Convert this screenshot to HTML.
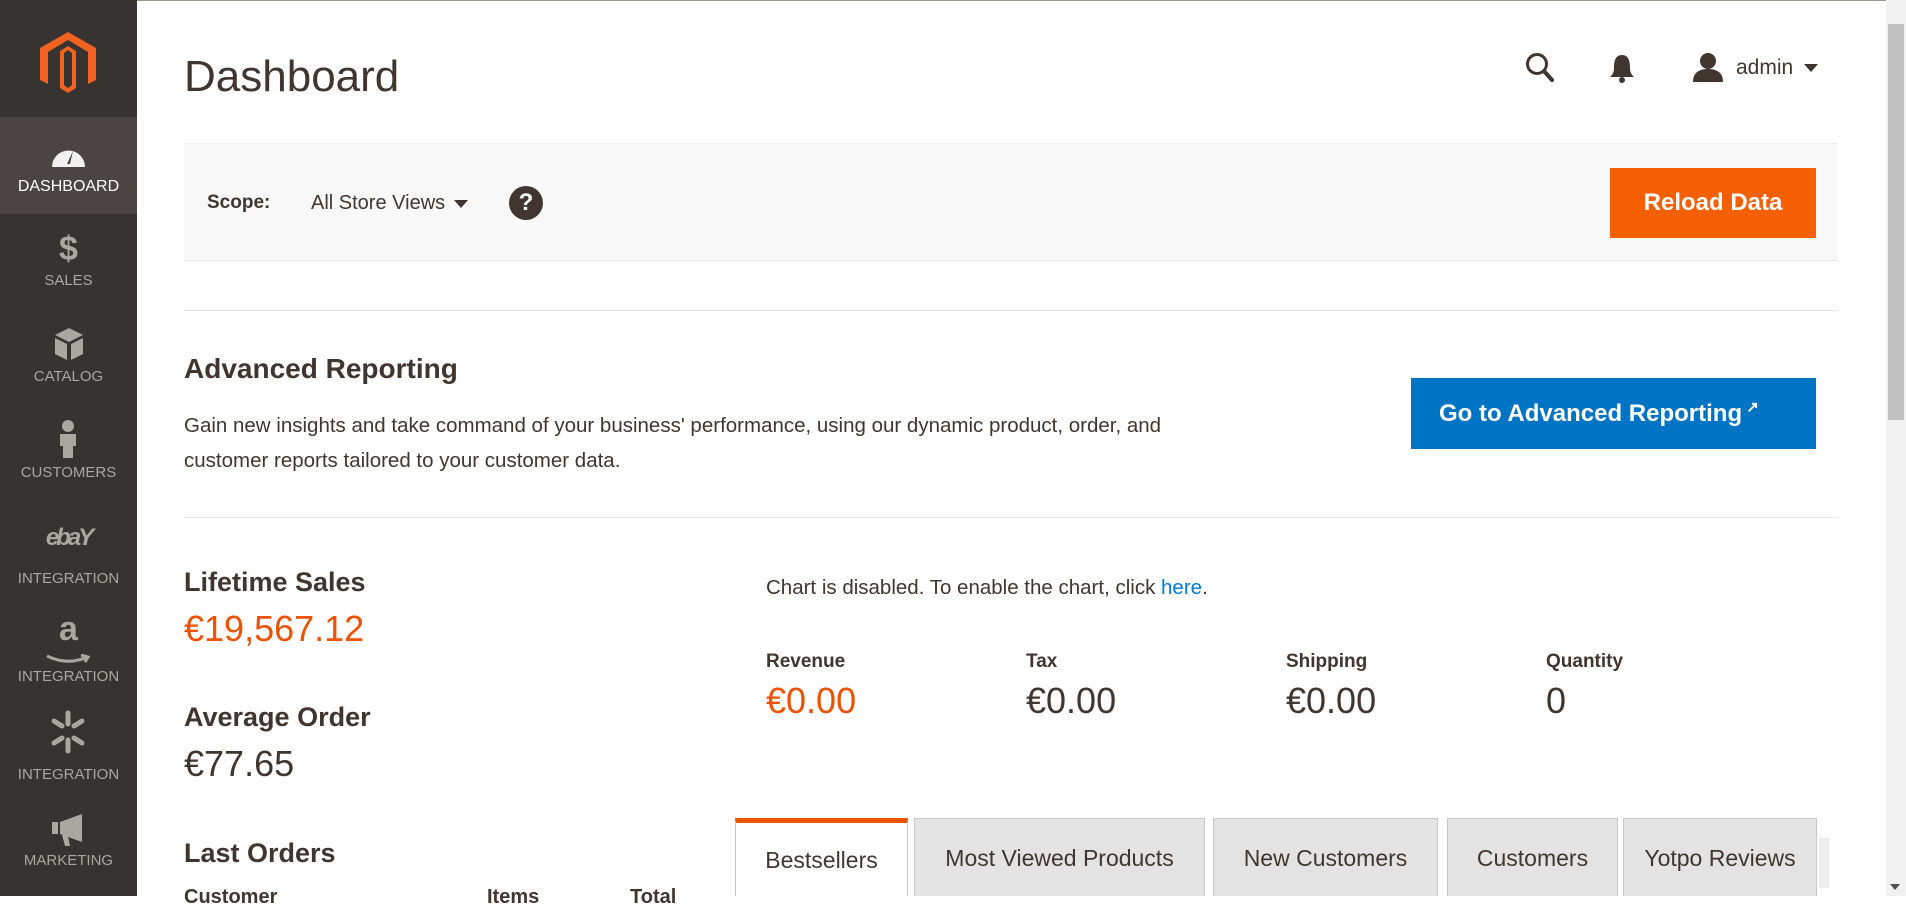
<!DOCTYPE html>
<html><head><meta charset="utf-8"><style>
*{margin:0;padding:0;box-sizing:border-box}
body{width:1906px;height:896px;overflow:hidden;background:#fefefe;font-family:"Liberation Sans",sans-serif;color:#41362f;position:relative}
.abs{position:absolute}
#side{left:0;top:0;width:137px;height:896px;background:#373330}
.item{position:absolute;left:0;width:137px;text-align:center;color:#aaa6a0;font-size:15px}
.item .lb{position:absolute;left:0;right:0}
.b{font-weight:bold}
.tab{position:absolute;top:818px;height:78px;background:#e3e3e3;border:1px solid #c8c8c8;border-bottom:none;font-size:23px;color:#41362f;text-align:center;line-height:78px;white-space:nowrap}
</style></head><body>
<div class="abs" style="left:0;top:0;width:1906px;height:1px;background:#9a9a8a"></div>
<div id="side" class="abs">
  <svg class="abs" style="left:40px;top:32px" width="56" height="62" viewBox="0 0 56 62">
    <path d="M28 0 L56 16 V48 L48 52 V20 L28 8 L8 20 V52 L0 48 V16 Z" fill="#f26322"/>
    <path d="M28 14 L36 19 V56 L28 61 L20 56 V19 Z M24 21 V53 L28 56 L32 53 V21 L28 18 Z" fill="#f26322"/>
  </svg>
  <div class="abs" style="left:0;top:117px;width:137px;height:97px;background:#4a4542"></div>
  <div class="item" style="top:117px;height:97px;color:#fff">
    <svg class="abs" style="left:50px;top:26px" width="37" height="24" viewBox="0 0 37 24"><path d="M2 24 A16.5 16.5 0 0 1 35 24 Z" fill="#f1f1f1"/><path d="M17 21 L23 8 L20 21 Z" fill="#4a4542"/></svg>
    <div class="lb" style="top:61px;font-size:16px">DASHBOARD</div></div>
  <div class="item" style="top:214px;height:96px"><div class="lb b" style="top:16px;font-size:34px;color:#aaa6a0">$</div><div class="lb" style="top:58px">SALES</div></div>
  <div class="item" style="top:310px;height:96px">
    <svg class="abs" style="left:55px;top:18px" width="28" height="32" viewBox="0 0 28 32"><path d="M14 0 L28 7 L14 14 L0 7Z M0 10 L12 16 V32 L0 26Z M28 10 L16 16 V32 L28 26Z" fill="#aaa6a0"/></svg>
    <div class="lb" style="top:58px">CATALOG</div></div>
  <div class="item" style="top:406px;height:96px">
    <svg class="abs" style="left:58px;top:14px" width="20" height="38" viewBox="0 0 20 38"><circle cx="10" cy="6" r="6" fill="#aaa6a0"/><path d="M2 14 H18 V26 H15 V38 H5 V26 H2Z" fill="#aaa6a0"/></svg>
    <div class="lb" style="top:58px">CUSTOMERS</div></div>
  <div class="item" style="top:502px;height:96px"><div class="lb b" style="top:22px;font-size:24px;letter-spacing:-3px;font-style:italic">ebaY</div><div class="lb" style="top:68px">INTEGRATION</div></div>
  <div class="item" style="top:598px;height:98px"><div class="lb b" style="top:12px;font-size:34px">a</div>
    <svg class="abs" style="left:45px;top:56px" width="46" height="10" viewBox="0 0 46 10"><path d="M2 2 Q23 12 42 3 M36 1 L43 3 L40 8" stroke="#aaa6a0" stroke-width="3" fill="none"/></svg>
    <div class="lb" style="top:70px">INTEGRATION</div></div>
  <div class="item" style="top:696px;height:98px">
    <svg class="abs" style="left:48px;top:14px" width="40" height="44" viewBox="0 0 40 44" stroke="#aaa6a0" stroke-width="5" stroke-linecap="round"><path d="M20 3 V14 M20 30 V41 M6 11 L14 16 M34 11 L26 16 M6 33 L14 28 M34 33 L26 28"/></svg>
    <div class="lb" style="top:70px">INTEGRATION</div></div>
  <div class="item" style="top:794px;height:102px">
    <svg class="abs" style="left:52px;top:20px" width="34" height="32" viewBox="0 0 34 32"><path d="M0 8 H6 V20 H0Z M8 8 L30 0 V28 L8 20Z M10 21 L16 22 L18 32 L13 32Z" fill="#aaa6a0"/></svg>
    <div class="lb" style="top:58px">MARKETING</div></div>
</div>

<div class="abs" style="left:184px;top:52px;font-size:44px;color:#41362f">Dashboard</div>
<svg class="abs" style="left:1525px;top:52px" width="30" height="32" viewBox="0 0 30 32"><circle cx="12" cy="12" r="9.5" stroke="#41362f" stroke-width="3" fill="none"/><path d="M19 19 L27 28" stroke="#41362f" stroke-width="4" stroke-linecap="round"/></svg>
<svg class="abs" style="left:1610px;top:54px" width="24" height="30" viewBox="0 0 24 30"><path d="M12 1 C5 1 4 8 4 14 C4 19 2 21 0 23 H24 C22 21 20 19 20 14 C20 8 19 1 12 1Z" fill="#41362f"/><circle cx="12" cy="26" r="3" fill="#41362f"/></svg>
<svg class="abs" style="left:1692px;top:52px" width="32" height="30" viewBox="0 0 32 30"><circle cx="16" cy="9" r="8" fill="#41362f"/><path d="M1 30 C1 20 8 17 16 17 C24 17 31 20 31 30Z" fill="#41362f"/></svg>
<div class="abs" style="left:1736px;top:56px;font-size:21px;color:#41362f">admin</div>
<svg class="abs" style="left:1804px;top:64px" width="14" height="8"><path d="M0 0 H14 L7 8Z" fill="#41362f"/></svg>

<div class="abs" style="left:184px;top:143px;width:1654px;height:118px;background:#f8f8f8;border-top:1px solid #ececf2;border-bottom:1px solid #e6e6ea"></div>
<div class="abs b" style="left:207px;top:192px;font-size:19px">Scope:</div>
<div class="abs" style="left:311px;top:192px;font-size:20px">All Store Views</div>
<svg class="abs" style="left:454px;top:200px" width="14" height="8"><path d="M0 0 H14 L7 8Z" fill="#41362f"/></svg>
<div class="abs b" style="left:509px;top:186px;width:34px;height:34px;border-radius:50%;background:#41362f;color:#fff;font-size:24px;text-align:center;line-height:34px">?</div>
<div class="abs b" style="left:1610px;top:168px;width:206px;height:70px;background:#f65f02;color:#fff;font-size:24px;text-align:center;line-height:70px">Reload Data</div>

<div class="abs" style="left:184px;top:310px;width:1654px;height:1px;background:#e6e6ea"></div>
<div class="abs b" style="left:184px;top:353px;font-size:28px">Advanced Reporting</div>
<div class="abs" style="left:184px;top:408px;font-size:20.5px;line-height:35px;width:1150px">Gain new insights and take command of your business' performance, using our dynamic product, order, and<br>customer reports tailored to your customer data.</div>
<div class="abs b" style="left:1411px;top:378px;width:405px;height:71px;background:#0074c4;color:#fff;font-size:24px;line-height:71px;padding-left:28px">Go to Advanced Reporting<span style="font-size:15px;position:relative;top:-9px"> &#x2197;</span></div>
<div class="abs" style="left:184px;top:517px;width:1654px;height:1px;background:#e6e6ea"></div>

<div class="abs b" style="left:184px;top:567px;font-size:27px">Lifetime Sales</div>
<div class="abs" style="left:184px;top:608px;font-size:36px;color:#eb5202">€19,567.12</div>
<div class="abs b" style="left:184px;top:702px;font-size:27px">Average Order</div>
<div class="abs" style="left:184px;top:743px;font-size:36px">€77.65</div>
<div class="abs b" style="left:184px;top:838px;font-size:27px">Last Orders</div>
<div class="abs b" style="left:184px;top:886px;font-size:20px">Customer</div>
<div class="abs b" style="left:487px;top:886px;font-size:20px">Items</div>
<div class="abs b" style="left:630px;top:886px;font-size:20px">Total</div>

<div class="abs" style="left:766px;top:576px;font-size:20.5px">Chart is disabled. To enable the chart, click <span style="color:#007bdb">here</span>.</div>
<div class="abs b" style="left:766px;top:651px;font-size:19px">Revenue</div>
<div class="abs" style="left:766px;top:680px;font-size:36px;color:#eb5202">€0.00</div>
<div class="abs b" style="left:1026px;top:651px;font-size:19px">Tax</div>
<div class="abs" style="left:1026px;top:680px;font-size:36px">€0.00</div>
<div class="abs b" style="left:1286px;top:651px;font-size:19px">Shipping</div>
<div class="abs" style="left:1286px;top:680px;font-size:36px">€0.00</div>
<div class="abs b" style="left:1546px;top:651px;font-size:19px">Quantity</div>
<div class="abs" style="left:1546px;top:680px;font-size:36px">0</div>

<div class="tab" style="left:735px;width:173px;background:#fff;border-top:5px solid #eb5202;line-height:74px">Bestsellers</div>
<div class="tab" style="left:914px;width:291px">Most Viewed Products</div>
<div class="tab" style="left:1213px;width:225px">New Customers</div>
<div class="tab" style="left:1447px;width:171px">Customers</div>
<div class="tab" style="left:1623px;width:194px">Yotpo Reviews</div>
<div class="abs" style="left:1819px;top:838px;width:10px;height:50px;background:#ececec"></div>

<div class="abs" style="left:1886px;top:0;width:20px;height:896px;background:#f1f1f1"></div>
<div class="abs" style="left:1888px;top:24px;width:16px;height:396px;background:#c1c1c1"></div>
<svg class="abs" style="left:1890px;top:884px" width="10" height="6"><path d="M0 0 H10 L5 6Z" fill="#505050"/></svg>
</body></html>
